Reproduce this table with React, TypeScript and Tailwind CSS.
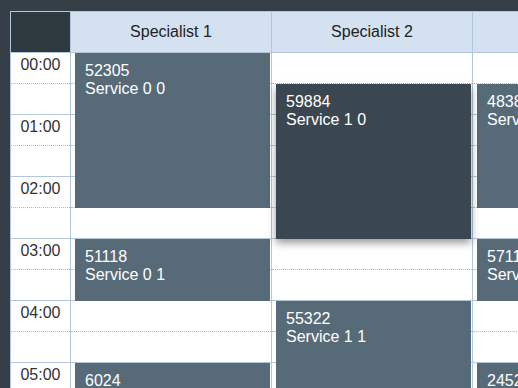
type Booking = {
  id: number;
  service: string;
  start: number; // half-hour slot index
  slots: number;
  active?: boolean;
};

const SLOT = 31;
const HOURS = ["00:00", "01:00", "02:00", "03:00", "04:00", "05:00"];

const columns: { name: string; bookings: Booking[] }[] = [
  {
    name: "Specialist 1",
    bookings: [
      { id: 52305, service: "Service 0 0", start: 0, slots: 5 },
      { id: 51118, service: "Service 0 1", start: 6, slots: 2 },
      { id: 6024, service: "Service 0 2", start: 10, slots: 2 },
    ],
  },
  {
    name: "Specialist 2",
    bookings: [
      { id: 59884, service: "Service 1 0", start: 1, slots: 5, active: true },
      { id: 55322, service: "Service 1 1", start: 8, slots: 3 },
    ],
  },
  {
    name: "Specialist 3",
    bookings: [
      { id: 48381, service: "Service 2 0", start: 1, slots: 4 },
      { id: 57114, service: "Service 2 1", start: 6, slots: 2 },
      { id: 24527, service: "Service 2 2", start: 10, slots: 2 },
    ],
  },
];

function Slots() {
  return (
    <>
      {HOURS.map((h) => (
        <div key={h}>
          <div className="h-[31px] border-b border-dotted border-[#a9bdd2]" />
          <div className="h-[31px] border-b border-[#b3c7dc]" />
        </div>
      ))}
    </>
  );
}

function Card({ b }: { b: Booking }) {
  return (
    <div
      className={
        b.active
          ? "absolute left-[4px] w-[195px] pt-[9px] pl-[10px] text-white text-[16px] leading-[18px] bg-[#3b4750] shadow-[0_4px_8px_rgba(0,0,0,0.4)] z-10"
          : "absolute left-[4px] w-[195px] pt-[9px] pl-[10px] text-white text-[16px] leading-[18px] bg-[#576a78]"
      }
      style={{ top: b.start * SLOT, height: b.slots * SLOT }}
    >
      <div>{b.id}</div>
      <div>{b.service}</div>
    </div>
  );
}

export default function App() {
  return (
    <div className="w-[518px] h-[388px] overflow-hidden bg-[#363f47] pt-[11px] pl-[10px] font-['Liberation_Sans',Arial,sans-serif]">
      <div className="w-max bg-white border-l border-t border-[#b3c7dc]">
        {/* header */}
        <div className="flex h-[41px] border-b border-[#b3c7dc] bg-[#d3e1f1]">
          <div className="w-[60px] border-r border-[#b3c7dc] bg-[#2f3940]" />
          {columns.map((c) => (
            <div
              key={c.name}
              className="w-[201px] border-r border-[#b3c7dc] flex items-center justify-center text-[16px] leading-[18px] text-[#222]"
            >
              {c.name}
            </div>
          ))}
        </div>

        {/* body */}
        <div className="flex">
          <div className="w-[60px] border-r border-[#b3c7dc]">
            {HOURS.map((h) => (
              <div key={h}>
                <div className="h-[31px] border-b border-dotted border-[#a9bdd2] text-center text-[16px] leading-6 text-[#333]">
                  {h}
                </div>
                <div className="h-[31px] border-b border-[#b3c7dc]" />
              </div>
            ))}
          </div>
          {columns.map((c) => (
            <div key={c.name} className="relative w-[201px] border-r border-[#b3c7dc]">
              <Slots />
              {c.bookings.map((b) => (
                <Card key={b.id} b={b} />
              ))}
            </div>
          ))}
        </div>
      </div>
    </div>
  );
}
